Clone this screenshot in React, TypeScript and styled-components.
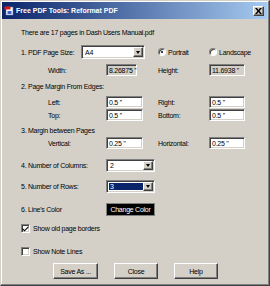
import React from 'react'
import styled, { createGlobalStyle, css } from 'styled-components'

const GlobalStyle = createGlobalStyle`
  html, body { margin: 0; padding: 0; background: #d4d0c8; }
  body { font-family: "Liberation Sans", Arial, sans-serif; }
`

const sunken = css`
  box-sizing: border-box;
  border-top: 1px solid #808080;
  border-left: 1px solid #808080;
  border-bottom: 1px solid #ffffff;
  border-right: 1px solid #ffffff;
  box-shadow: inset 1px 1px 0 #404040, inset -1px -1px 0 #d4d0c8;
`

const raised = css`
  box-sizing: border-box;
  border-top: 1px solid #ffffff;
  border-left: 1px solid #ffffff;
  border-bottom: 1px solid #404040;
  border-right: 1px solid #404040;
  box-shadow: inset -1px -1px 0 #808080;
`

function App() {
  return (
    <>
      <GlobalStyle />
      <Window>
        <TitleBar>
          <TitleIcon viewBox="0 0 10 10">
            <rect x="2" y="1" width="7" height="8" fill="#ffffff" stroke="#5a6fa8" strokeWidth="0.6" />
            <rect x="0.5" y="0.5" width="6" height="3" fill="#d81818" />
            <rect x="3.5" y="5" width="4" height="3" fill="#3b62c8" />
          </TitleIcon>
          <TitleText>Free PDF Tools: Reformat PDF</TitleText>
          <CloseBox>
            <svg width="7" height="6" viewBox="0 0 7 6">
              <path d="M0 0 L2 0 L3.5 2 L5 0 L7 0 L4.5 3 L7 6 L5 6 L3.5 4 L2 6 L0 6 L2.5 3 Z" fill="#000" />
            </svg>
          </CloseBox>
        </TitleBar>

        <Content>
          <Row $mt={8} $h={10}>There are 17 pages in Dash Users Manual.pdf</Row>

          <Row $mt={8} $h={14}>
            <Label $w={60}>1. PDF Page Size:</Label>
            <Combo $w={64} $h={14}>
              <ComboText>A4</ComboText>
              <ComboButton><Arrow /></ComboButton>
            </Combo>
            <RadioItem $w={51} $ml={13}>
              <Radio $on />
              <span>Portrait</span>
            </RadioItem>
            <RadioItem $w={60}>
              <Radio />
              <span>Landscape</span>
            </RadioItem>
          </Row>

          <Row $mt={5} $h={12} $indent={27}>
            <Cell>
              <Label $w={58}>Width:</Label>
              <Field $w={31} $readOnly>8.26875 ''</Field>
            </Cell>
            <Label $w={51}>Height:</Label>
            <Field $w={36} $readOnly>11.6938 ''</Field>
          </Row>

          <Row $mt={5} $h={10}>2. Page Margin From Edges:</Row>

          <Row $mt={5} $h={12} $indent={27}>
            <Cell>
              <Label $w={58}>Left:</Label>
              <Field $w={37}>0.5 ''</Field>
            </Cell>
            <Label $w={51}>Right:</Label>
            <Field $w={36}>0.5 ''</Field>
          </Row>

          <Row $mt={1} $h={12} $indent={27}>
            <Cell>
              <Label $w={58}>Top:</Label>
              <Field $w={37}>0.5 ''</Field>
            </Cell>
            <Label $w={51}>Bottom:</Label>
            <Field $w={36}>0.5 ''</Field>
          </Row>

          <Row $mt={4} $h={10}>3. Margin between Pages</Row>

          <Row $mt={2} $h={12} $indent={27}>
            <Cell>
              <Label $w={58}>Vertical:</Label>
              <Field $w={37}>0.25 ''</Field>
            </Cell>
            <Label $w={51}>Horizontal:</Label>
            <Field $w={36}>0.25 ''</Field>
          </Row>

          <Row $mt={10} $h={13}>
            <Label $w={85}>4. Number of Columns:</Label>
            <Combo $w={49} $h={13}>
              <ComboText>2</ComboText>
              <ComboButton><Arrow /></ComboButton>
            </Combo>
          </Row>

          <Row $mt={8} $h={13}>
            <Label $w={85}>5. Number of Rows:</Label>
            <Combo $w={49} $h={13}>
              <ComboText $selected>3</ComboText>
              <ComboButton><Arrow /></ComboButton>
            </Combo>
          </Row>

          <Row $mt={10} $h={13}>
            <Label $w={85}>6. Line's Color</Label>
            <ColorButton>Change Color</ColorButton>
          </Row>

          <Row $mt={7} $h={10}>
            <Check>
              {true && (
                <svg width="7" height="7" viewBox="0 0 7 7">
                  <path d="M0.5 3 L2.5 5 L6.5 1 L6.5 2.6 L2.5 6.5 L0.5 4.6 Z" fill="#000" />
                </svg>
              )}
            </Check>
            <span>Show old page borders</span>
          </Row>

          <Row $mt={13} $h={10}>
            <Check />
            <span>Show Note Lines</span>
          </Row>

          <ButtonRow>
            <PushButton $w={45}>Save As ...</PushButton>
            <PushButton $w={44}>Close</PushButton>
            <PushButton $w={44}>Help</PushButton>
          </ButtonRow>
        </Content>
      </Window>
    </>
  )
}

export default App

const Window = styled.div`
  box-sizing: border-box;
  width: 270px;
  height: 286px;
  background: #d4d0c8;
  border-top: 1px solid #d4d0c8;
  border-left: 1px solid #d4d0c8;
  border-right: 1px solid #404040;
  border-bottom: 1px solid #404040;
  box-shadow: inset -1px -1px 0 #808080, inset 1px 1px 0 #ffffff;
  padding: 1px 2px 0 1px;
  font-size: 7px;
  letter-spacing: -0.25px;
  color: #000;
  overflow: hidden;
`

const TitleBar = styled.div`
  height: 17px;
  display: flex;
  align-items: center;
  background: linear-gradient(to right, #0a246a, #a6caf0);
  padding: 0 3px 0 2px;
`

const TitleIcon = styled.svg`
  width: 10px;
  height: 10px;
  flex: none;
`

const TitleText = styled.span`
  margin-left: 2px;
  flex: 1;
  color: #fff;
  font-weight: bold;
  font-size: 7px;
  letter-spacing: 0;
  white-space: nowrap;
`

const CloseBox = styled.div`
  ${raised};
  width: 11px;
  height: 10px;
  background: #d4d0c8;
  display: flex;
  align-items: center;
  justify-content: center;
`

const Content = styled.div`
  display: flex;
  flex-direction: column;
  padding-left: 19px;
`

const Row = styled.div<{ $mt: number; $h: number; $indent?: number }>`
  display: flex;
  align-items: center;
  margin-top: ${p => p.$mt}px;
  height: ${p => p.$h}px;
  padding-left: ${p => p.$indent ?? 0}px;
  white-space: nowrap;
`

const Cell = styled.div`
  display: flex;
  align-items: center;
  width: 110px;
  flex: none;
`

const Label = styled.span<{ $w: number }>`
  width: ${p => p.$w}px;
  flex: none;
`

const Field = styled.div<{ $w: number; $readOnly?: boolean }>`
  ${sunken};
  width: ${p => p.$w}px;
  height: 12px;
  flex: none;
  background: ${p => (p.$readOnly ? '#d4d0c8' : '#ffffff')};
  padding-left: 2px;
  display: flex;
  align-items: center;
  line-height: 1;
`

const Combo = styled.div<{ $w: number; $h: number }>`
  ${sunken};
  width: ${p => p.$w}px;
  height: ${p => p.$h}px;
  flex: none;
  background: #fff;
  display: flex;
  padding: 2px;
`

const ComboText = styled.div<{ $selected?: boolean }>`
  flex: 1;
  display: flex;
  align-items: center;
  padding-left: 1px;
  background: ${p => (p.$selected ? '#0a246a' : '#fff')};
  color: ${p => (p.$selected ? '#fff' : '#000')};
`

const ComboButton = styled.div`
  ${raised};
  width: 10px;
  background: #d4d0c8;
  display: flex;
  align-items: center;
  justify-content: center;
  margin: -1px -1px -1px 0;
`

const Arrow = styled.span`
  width: 0;
  height: 0;
  border-left: 2.5px solid transparent;
  border-right: 2.5px solid transparent;
  border-top: 3px solid #000;
`

const RadioItem = styled.div<{ $w: number; $ml?: number }>`
  display: flex;
  align-items: center;
  gap: 2px;
  width: ${p => p.$w}px;
  margin-left: ${p => p.$ml ?? 0}px;
  flex: none;
`

const Radio = styled.span<{ $on?: boolean }>`
  box-sizing: border-box;
  width: 8px;
  height: 8px;
  border-radius: 50%;
  background: #fff;
  border: 1px solid;
  border-color: #808080 #ffffff #ffffff #808080;
  box-shadow: inset 1px 1px 0 #404040;
  display: flex;
  align-items: center;
  justify-content: center;
  &::after {
    content: '';
    width: 2px;
    height: 2px;
    border-radius: 50%;
    background: ${p => (p.$on ? '#000' : 'transparent')};
  }
`

const Check = styled.span`
  ${sunken};
  width: 9px;
  height: 9px;
  background: #fff;
  margin-right: 3px;
  display: flex;
  align-items: center;
  justify-content: center;
  flex: none;
`

const ColorButton = styled.div`
  box-sizing: border-box;
  width: 49px;
  height: 13px;
  background: #000;
  color: #fff;
  border: 1px solid #808080;
  box-shadow: inset 0 0 0 1px #000;
  display: flex;
  align-items: center;
  justify-content: center;
`

const ButtonRow = styled.div`
  display: flex;
  gap: 16px;
  margin-top: 7px;
  padding-left: 32px;
`

const PushButton = styled.div<{ $w: number }>`
  ${raised};
  width: ${p => p.$w}px;
  height: 16px;
  background: #d4d0c8;
  display: flex;
  align-items: center;
  justify-content: center;
`
